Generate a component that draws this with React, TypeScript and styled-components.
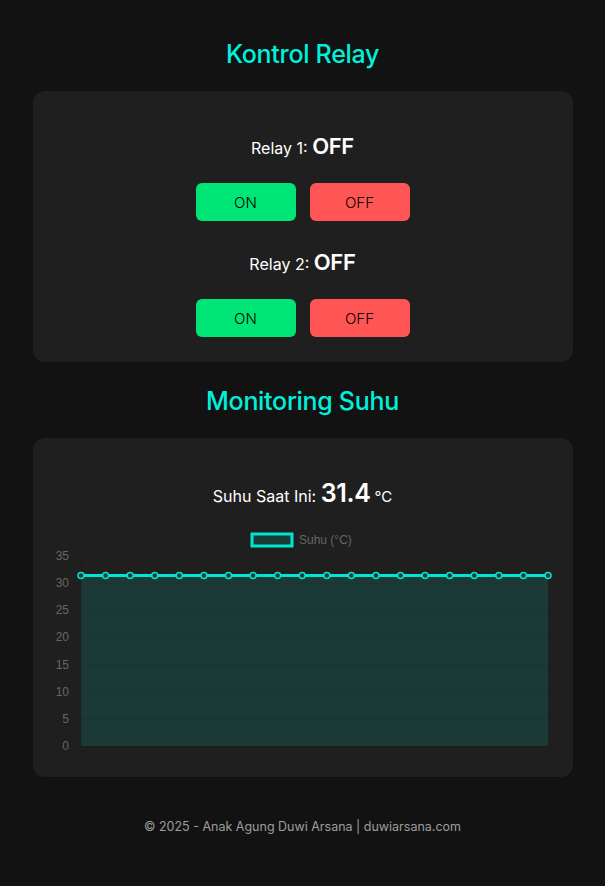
import React from "react";
import styled, { createGlobalStyle } from "styled-components";

const GlobalStyle = createGlobalStyle`
  body {
    margin: 0;
    background: #121212;
    font-family: "Inter", "Noto Sans", sans-serif;
    color: #ffffff;
  }
`;

const Page = styled.div`
  display: flex;
  flex-direction: column;
  align-items: center;
  padding: 39px 32px 0;
`;

const Title = styled.h2<{ $top?: number }>`
  margin: ${(p) => p.$top ?? 0}px 0 22px;
  height: 30px;
  line-height: 30px;
  font-size: 25px;
  font-weight: 500;
  letter-spacing: -0.3px;
  color: #00f0dc;
`;

const Card = styled.div<{ $pt: number; $pb: number }>`
  box-sizing: border-box;
  width: 540px;
  background: #1f1f1f;
  border-radius: 12px;
  padding: ${(p) => p.$pt}px 20px ${(p) => p.$pb}px;
  display: flex;
  flex-direction: column;
  align-items: center;
`;

const RelayGroup = styled.div`
  display: flex;
  flex-direction: column;
  align-items: center;
  & + & {
    margin-top: 26px;
  }
`;

const Status = styled.div`
  height: 30px;
  line-height: 30px;
  font-size: 16px;
  margin-bottom: 22px;
  white-space: nowrap;
`;

const Big = styled.span<{ $size: number }>`
  font-size: ${(p) => p.$size}px;
  font-weight: 600;
  letter-spacing: -0.3px;
`;

const Buttons = styled.div`
  display: flex;
  gap: 14px;
`;

const Button = styled.button<{ $on: boolean }>`
  width: 100px;
  height: 38px;
  border: none;
  border-radius: 6px;
  background: ${(p) => (p.$on ? "#00e676" : "#ff5555")};
  color: #000;
  font-family: "Inter", "Noto Sans", sans-serif;
  font-weight: 300;
  font-size: 15px;
  cursor: pointer;
`;

const Temp = styled.div`
  margin-top: 19px;
  height: 32px;
  line-height: 32px;
  font-size: 16px;
  white-space: nowrap;
`;

const Unit = styled.span`
  font-size: 15px;
  margin-left: 4px;
`;

const ChartBox = styled.svg`
  display: block;
  margin-top: 16px;
  font-family: "Liberation Sans", Arial, sans-serif;
`;

const Footer = styled.div`
  margin-top: 40px;
  height: 20px;
  line-height: 20px;
  font-size: 12.5px;
  color: #9e9e9e;
`;

const cyan = "#00e5d0";
const fill = "rgba(0, 229, 208, 0.13)";

const Chart: React.FC = () => {
  const w = 500;
  const h = 235;
  const left = 28;
  const right = 495;
  const top = 31;
  const bottom = 221;
  const max = 35;
  const data = Array.from({ length: 20 }, () => 31.4);
  const y = (v: number) => bottom - (v / max) * (bottom - top);
  const x = (i: number) => left + (i * (right - left)) / (data.length - 1);
  const ticks = [0, 5, 10, 15, 20, 25, 30, 35];
  const line = data.map((v, i) => `${i ? "L" : "M"}${x(i)},${y(v)}`).join(" ");
  const area = `${line} L${right},${bottom} L${left},${bottom} Z`;

  return (
    <ChartBox width={w} height={h} viewBox={`0 0 ${w} ${h}`}>
      <rect x={199} y={9} width={40} height={12} fill={fill} stroke={cyan} strokeWidth={3} />
      <text x={246} y={19} fontSize={12} fill="#666">
        Suhu (°C)
      </text>
      {ticks.map((t) => (
        <g key={t}>
          <line x1={left - 8} x2={right} y1={y(t) + 0.5} y2={y(t) + 0.5} stroke="rgba(0,0,0,0.1)" />
          <text x={16} y={y(t) + 4} fontSize={12} fill="#666" textAnchor="end">
            {t}
          </text>
        </g>
      ))}
      <line x1={left + 0.5} x2={left + 0.5} y1={top} y2={bottom + 8} stroke="rgba(0,0,0,0.1)" />
      <path d={area} fill={fill} />
      <path d={line} fill="none" stroke={cyan} strokeWidth={3} />
      {data.map((v, i) => (
        <circle key={i} cx={x(i)} cy={y(v)} r={3} fill="#1e3a36" stroke={cyan} strokeWidth={1.5} />
      ))}
    </ChartBox>
  );
};

const RelayControl: React.FC<{ n: number; state: string }> = ({ n, state }) => (
  <RelayGroup>
    <Status>
      Relay {n}: <Big $size={22}>{state}</Big>
    </Status>
    <Buttons>
      <Button $on>ON</Button>
      <Button $on={false}>OFF</Button>
    </Buttons>
  </RelayGroup>
);

export default function App() {
  return (
    <>
      <GlobalStyle />
      <Page>
        <Title>Kontrol Relay</Title>
        <Card $pt={40} $pb={25}>
          <RelayControl n={1} state="OFF" />
          <RelayControl n={2} state="OFF" />
        </Card>
        <Title $top={24}>Monitoring Suhu</Title>
        <Card $pt={20} $pb={17}>
          <Temp>
            Suhu Saat Ini: <Big $size={25}>31.4</Big>
            <Unit>°C</Unit>
          </Temp>
          <Chart />
        </Card>
        <Footer>© 2025 - Anak Agung Duwi Arsana | duwiarsana.com</Footer>
      </Page>
    </>
  );
}
